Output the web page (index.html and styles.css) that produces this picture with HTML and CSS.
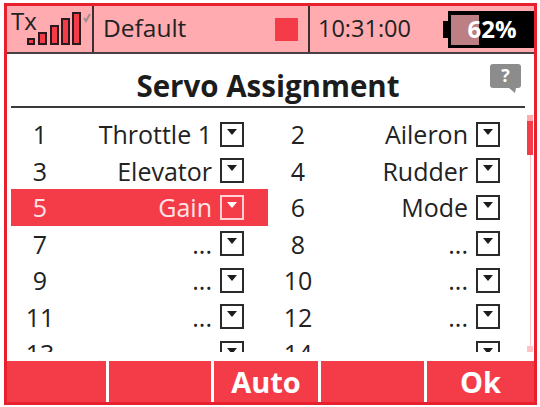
FILE: index.html
```html
<!doctype html>
<html lang="en">
  <head>
    <meta charset="UTF-8" />
    <meta name="viewport" content="width=device-width, initial-scale=1.0" />
    <title>Servo Assignment</title>
    <link rel="stylesheet" href="styles.css">
  </head>
  <body>
    <main class="screen">
      <header class="status">
        <div class="signal">
          <span class="tx">Tx</span>
          <svg class="bars" width="66" height="42" viewBox="0 0 66 42">
            <rect x="1" y="29" width="6" height="5" />
            <rect x="12" y="23" width="7" height="11" />
            <rect x="24" y="16" width="7" height="18" />
            <rect x="35" y="9" width="7" height="25" />
            <rect x="46" y="3" width="7" height="31" />
            <path class="tick" d="M57 8l2 3 4-7" />
          </svg>
        </div>
        <div class="model">
          <span class="model-name">Default</span>
          <span class="stop"></span>
        </div>
        <div class="clock">10:31:00</div>
        <div class="battery">
          <span class="battery-nub"></span>
          <div class="battery-body">
            <span class="battery-fill"></span>
            <span class="battery-text">62%</span>
          </div>
        </div>
      </header>

      <div class="content">
        <div class="main">
          <div class="heading">
            <h1>Servo Assignment</h1>
            <svg class="help" width="33" height="30" viewBox="0 0 33 30">
              <path d="M4 0h25a3 3 0 0 1 3 3v18a3 3 0 0 1-3 3h-2l-1 5-6-5H4a3 3 0 0 1-3-3V3a3 3 0 0 1 3-3z" />
              <text x="16.5" y="18" text-anchor="middle">?</text>
            </svg>
          </div>
          <div class="servos">
            <div class="servo"><span class="num">1</span><span class="name">Throttle 1</span><span class="drop"></span></div>
            <div class="servo"><span class="num">2</span><span class="name">Aileron</span><span class="drop"></span></div>
            <div class="servo"><span class="num">3</span><span class="name">Elevator</span><span class="drop"></span></div>
            <div class="servo"><span class="num">4</span><span class="name">Rudder</span><span class="drop"></span></div>
            <div class="servo active"><span class="num">5</span><span class="name">Gain</span><span class="drop"></span></div>
            <div class="servo"><span class="num">6</span><span class="name">Mode</span><span class="drop"></span></div>
            <div class="servo"><span class="num">7</span><span class="name">...</span><span class="drop"></span></div>
            <div class="servo"><span class="num">8</span><span class="name">...</span><span class="drop"></span></div>
            <div class="servo"><span class="num">9</span><span class="name">...</span><span class="drop"></span></div>
            <div class="servo"><span class="num">10</span><span class="name">...</span><span class="drop"></span></div>
            <div class="servo"><span class="num">11</span><span class="name">...</span><span class="drop"></span></div>
            <div class="servo"><span class="num">12</span><span class="name">...</span><span class="drop"></span></div>
            <div class="servo"><span class="num">13</span><span class="name">...</span><span class="drop"></span></div>
            <div class="servo"><span class="num">14</span><span class="name">...</span><span class="drop"></span></div>
          </div>
        </div>
        <div class="scrollbar">
          <span class="thumb"></span>
          <span class="track-end"></span>
        </div>
      </div>

      <footer class="softkeys">
        <button class="key key-1"></button>
        <button class="key key-2"></button>
        <button class="key key-3">Auto</button>
        <button class="key key-4"></button>
        <button class="key key-5">Ok</button>
      </footer>
    </main>
  </body>
</html>
```

FILE: styles.css
```css
html,
body {
  margin: 0;
  background-color: #fff;
}

body {
  font-family: "Open Sans", "Noto Sans", sans-serif;
  color: #222;
  width: 540px;
  height: 407px;
  overflow: hidden;
}

.screen {
  box-sizing: border-box;
  width: 533px;
  height: 402px;
  margin: 3px 0 0 4px;
  border: 3px solid #e8202e;
  display: flex;
  flex-direction: column;
}

/* top status bar */
.status {
  box-sizing: border-box;
  height: 48px;
  display: flex;
  background-color: #ffabb0;
  border-bottom: 2px solid #4a4044;
  font-size: 24.5px;
}

.signal {
  box-sizing: border-box;
  width: 87px;
  border-right: 2px solid #3a3034;
  position: relative;
  padding: 0 0 0 4px;
}

.tx {
  font-size: 24px;
  line-height: 30px;
  display: block;
}

.bars {
  position: absolute;
  left: 20px;
  top: 4px;
}

.bars rect {
  fill: #f43c48;
  stroke: #2a1a1e;
  stroke-width: 2;
}

.bars .tick {
  fill: none;
  stroke: #a08a8e;
  stroke-width: 2;
}

.model {
  box-sizing: border-box;
  width: 216px;
  padding: 0 10px 0 9px;
  border-right: 2px solid #3a3034;
  display: flex;
  align-items: center;
  justify-content: space-between;
}

.model-name {
  margin-bottom: 4px;
}

.stop {
  width: 23px;
  height: 23px;
  background-color: #f43c48;
}

.clock {
  width: 133px;
  padding-left: 8px;
  box-sizing: border-box;
  line-height: 44px;
  font-size: 23.5px;
}

.battery {
  flex: 1;
  display: flex;
  align-items: center;
}

.battery-nub {
  width: 5px;
  height: 17px;
  background-color: #000;
}

.battery-body {
  flex: 1;
  height: 37px;
  background-color: #000;
  position: relative;
}

.battery-fill {
  display: block;
  width: 28px;
  height: 30px;
  margin: 4px 0 0 3px;
  background-color: #bc7f84;
}

.battery-text {
  position: absolute;
  left: 19px;
  top: 3px;
  width: 50px;
  text-align: center;
  color: #fff;
  font-weight: 700;
  font-size: 24px;
  line-height: 30px;
}

/* page body */
.content {
  flex: 1;
  min-height: 0;
  display: flex;
  padding-left: 4px;
}

.main {
  width: 514px;
  height: 298px;
  overflow: hidden;
}

.heading {
  box-sizing: border-box;
  height: 54px;
  border-bottom: 2px solid #3a3a3a;
  margin-bottom: 8px;
  position: relative;
}

.heading h1 {
  margin: 0;
  font-size: 29.5px;
  font-weight: 700;
  line-height: 64px;
  text-align: center;
  color: #1c1c1c;
}

.help {
  position: absolute;
  right: 3px;
  top: 10px;
}

.help path {
  fill: #8c8c8c;
}

.help text {
  fill: #fff;
  font-size: 18px;
  font-weight: 700;
}

.servos {
  display: grid;
  grid-template-columns: 257px 257px;
  grid-auto-rows: 36.5px;
  font-size: 25px;
}

.servo {
  display: grid;
  grid-template-columns: 58px 1fr 24px;
  column-gap: 8px;
  padding-right: 24px;
  align-items: center;
}

.servo:nth-child(even) {
  grid-template-columns: 60px 1fr 24px;
  padding-right: 25px;
}

.num {
  text-align: center;
}

.name {
  text-align: right;
  white-space: nowrap;
}

.drop {
  box-sizing: border-box;
  width: 24px;
  height: 25px;
  border: 2px solid #2a2a2a;
  display: flex;
  justify-content: center;
  padding-top: 5px;
}

.drop::after {
  content: "";
  width: 0;
  height: 0;
  border-left: 5px solid transparent;
  border-right: 5px solid transparent;
  border-top: 6px solid #1c1c1c;
}

.servo.active {
  background-color: #f43c48;
  color: #ffe4e6;
}

.servo.active .drop {
  border-color: #ffd0d4;
}

.servo.active .drop::after {
  border-top-color: #fff;
}

.scrollbar {
  width: 6px;
  height: 237px;
  margin: 61px 0 0 2px;
  display: flex;
  flex-direction: column;
  justify-content: space-between;
  background: linear-gradient(#ffc2c6, #ffc2c6) center / 1px 100% no-repeat;
}

.thumb {
  height: 40px;
  background: linear-gradient(#ffabb0 6px, #f43c48 6px);
}

.track-end {
  height: 6px;
  background-color: #ffc2c6;
}

/* bottom soft keys */
.softkeys {
  height: 41px;
  display: flex;
  gap: 3px;
  background-color: #fff;
}

.key {
  border: none;
  padding: 0;
  margin: 0;
  background-color: #f43c48;
  color: #fff;
  font-family: inherit;
  font-size: 29px;
  font-weight: 700;
}

.key-1 {
  width: 99px;
}

.key-2 {
  width: 102px;
}

.key-3 {
  width: 104px;
}

.key-4 {
  width: 103px;
}

.key-5 {
  flex: 1;
}
```
